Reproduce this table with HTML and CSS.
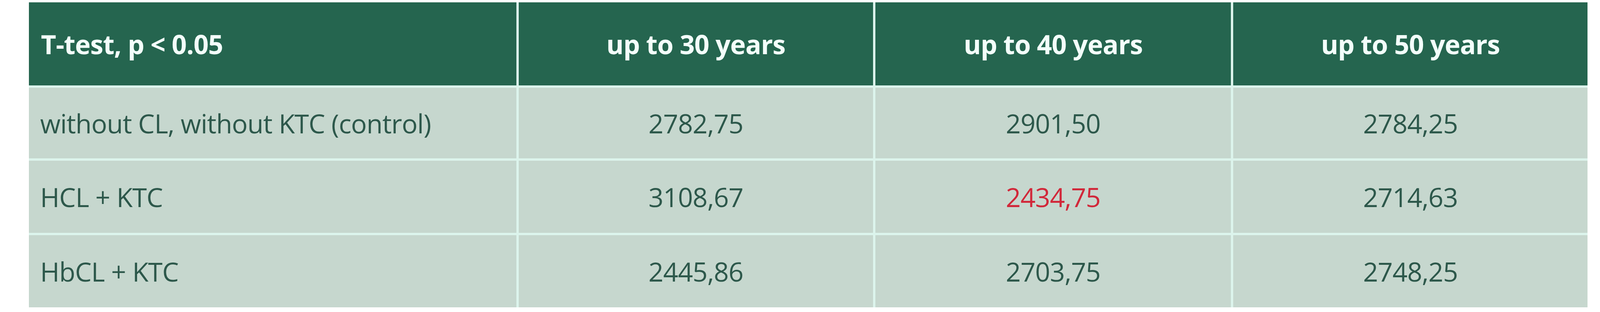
FILE: index.html
```html
<!DOCTYPE html>
<html lang="en">
<head>
<meta charset="utf-8">
<title>T-test table</title>
<link rel="stylesheet" href="styles.css">
</head>
<body>
<div class="page">
  <div class="table">
    <div class="cell head label">T-test, p &lt; 0.05</div>
    <div class="cell head num">up to 30 years</div>
    <div class="cell head num">up to 40 years</div>
    <div class="cell head num">up to 50 years</div>

    <div class="cell label">without CL, without KTC (control)</div>
    <div class="cell num">2782,75</div>
    <div class="cell num">2901,50</div>
    <div class="cell num">2784,25</div>

    <div class="cell label">HCL + KTC</div>
    <div class="cell num">3108,67</div>
    <div class="cell num sig">2434,75</div>
    <div class="cell num">2714,63</div>

    <div class="cell label">HbCL + KTC</div>
    <div class="cell num">2445,86</div>
    <div class="cell num">2703,75</div>
    <div class="cell num">2748,25</div>
  </div>
</div>
</body>
</html>
```

FILE: styles.css
```css
html, body {
  margin: 0;
  padding: 0;
  background: #ffffff;
}

.page {
  padding: 6px 0 0 1.801vw;
}

.table {
  display: grid;
  width: 97.42vw;
  grid-template-columns: 2000fr 1453fr 1459fr 1453fr;
  grid-template-rows: 213px 181px 185px 185px;
  gap: 6px;
  background: #dcf4ec;
  font-family: "Open Sans", "Noto Sans", sans-serif;
  font-size: min(108px, 1.648vw);
  letter-spacing: -0.014em;
}

.cell {
  display: flex;
  align-items: center;
  background: #c6d7ce;
  color: #2d584b;
  white-space: nowrap;
  overflow: hidden;
  min-width: 0;
}

.cell.label {
  padding-left: 0.43em;
}

.cell.num {
  justify-content: center;
}

.cell.head {
  background: #25654f;
  color: #f3fffb;
  font-weight: 700;
}

.cell.head.label {
  padding-left: 0.46em;
}

.cell.sig {
  color: #d1283a;
}
```
